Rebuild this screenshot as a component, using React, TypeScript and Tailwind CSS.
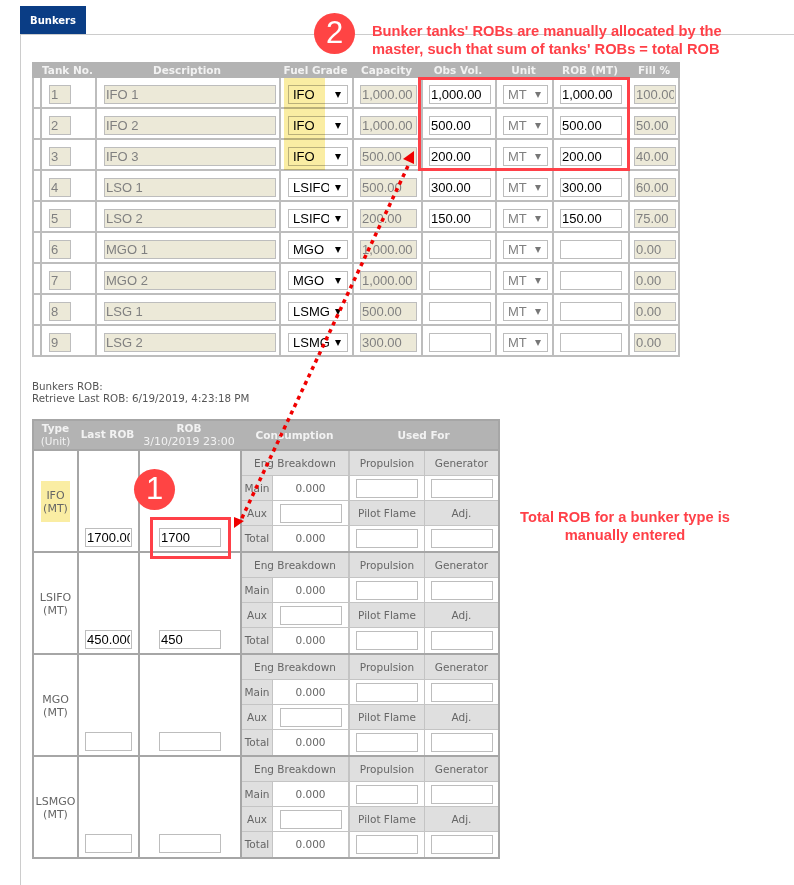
import React from "react";

const sans = "font-['DejaVu_Sans',sans-serif]";
const arial = "font-['Liberation_Sans',Arial,sans-serif]";

// One row of the tank table
const tanks = [
  { no: "1", desc: "IFO 1", grade: "IFO", cap: "1,000.00", obs: "1,000.00", rob: "1,000.00", fill: "100.00" },
  { no: "2", desc: "IFO 2", grade: "IFO", cap: "1,000.00", obs: "500.00", rob: "500.00", fill: "50.00" },
  { no: "3", desc: "IFO 3", grade: "IFO", cap: "500.00", obs: "200.00", rob: "200.00", fill: "40.00" },
  { no: "4", desc: "LSO 1", grade: "LSIFO", cap: "500.00", obs: "300.00", rob: "300.00", fill: "60.00" },
  { no: "5", desc: "LSO 2", grade: "LSIFO", cap: "200.00", obs: "150.00", rob: "150.00", fill: "75.00" },
  { no: "6", desc: "MGO 1", grade: "MGO", cap: "1,000.00", obs: "", rob: "", fill: "0.00" },
  { no: "7", desc: "MGO 2", grade: "MGO", cap: "1,000.00", obs: "", rob: "", fill: "0.00" },
  { no: "8", desc: "LSG 1", grade: "LSMGO", cap: "500.00", obs: "", rob: "", fill: "0.00" },
  { no: "9", desc: "LSG 2", grade: "LSMGO", cap: "300.00", obs: "", rob: "", fill: "0.00" },
];

const bunkers = [
  { type: "IFO", last: "1700.000", rob: "1700", mark: true },
  { type: "LSIFO", last: "450.000", rob: "450", mark: false },
  { type: "MGO", last: "", rob: "", mark: false },
  { type: "LSMGO", last: "", rob: "", mark: false },
];

const tankCols = "grid grid-cols-[8px_55px_184px_73px_69px_74px_57px_76px_52px]";

// Disabled inputs get the beige fill, the others stay white
const Field = ({ value, width, off }: { value: string; width: string; off?: boolean }) => (
  <input
    readOnly
    value={value}
    className={`${width} ${arial} block h-[19px] border border-[#bdbdbd] px-px text-[13px] outline-none ${
      off ? "bg-[#ece9d8] text-[#808080]" : "bg-white text-black"
    }`}
  />
);

const Pick = ({ value, width, off }: { value: string; width: string; off?: boolean }) => (
  <div
    className={`${width} ${arial} relative flex h-[19px] items-center overflow-hidden border border-[#bdbdbd] bg-white pl-[4px] text-[13px] ${
      off ? "text-[#808080]" : "text-black"
    }`}
  >
    <span className="whitespace-nowrap">{value}</span>
    <span className="absolute top-0 right-0 flex h-full w-[18px] items-center justify-start bg-white pl-[6px]">
      <svg width="6" height="6" viewBox="0 0 6 6">
        <path d="M0 0h6L3 6z" fill={off ? "#777" : "#000"} />
      </svg>
    </span>
  </div>
);

const TankCell = ({ children, pad }: { children?: React.ReactNode; pad: string }) => (
  <div className={`${pad} border-b-2 border-l-2 border-[#bdbdbd] pt-[7px]`}>{children}</div>
);

const TankTable = () => (
  <div className="relative ml-[11px] w-[648px]">
    <div className={`${tankCols} ${sans} h-[16px] bg-[#b3b3b3] text-[10.5px] leading-[16px] font-bold text-[#f2f2f2]`}>
      <div />
      <div className="text-center whitespace-nowrap">Tank No.</div>
      <div className="text-center">Description</div>
      <div className="text-center">Fuel Grade</div>
      <div className="text-center">Capacity</div>
      <div className="text-center">Obs Vol.</div>
      <div className="text-center">Unit</div>
      <div className="text-center">ROB (MT)</div>
      <div className="text-center">Fill %</div>
    </div>
    <div className="border-r-2 border-[#bdbdbd]">
      {tanks.map((t) => (
        <div key={t.no} className={`${tankCols} h-[31px]`}>
          <TankCell pad="" />
          <TankCell pad="pl-[7px]"><Field off value={t.no} width="w-[22px]" /></TankCell>
          <TankCell pad="pl-[7px]"><Field off value={t.desc} width="w-[172px]" /></TankCell>
          <TankCell pad="pl-[7px]"><Pick value={t.grade} width="w-[60px]" /></TankCell>
          <TankCell pad="pl-[6px]"><Field off value={t.cap} width="w-[57px]" /></TankCell>
          <TankCell pad="pl-[6px]"><Field value={t.obs} width="w-[62px]" /></TankCell>
          <TankCell pad="pl-[6px]"><Pick off value="MT" width="w-[45px]" /></TankCell>
          <TankCell pad="pl-[6px]"><Field value={t.rob} width="w-[62px]" /></TankCell>
          <TankCell pad="pl-[4px]"><Field off value={t.fill} width="w-[42px]" /></TankCell>
        </div>
      ))}
    </div>
    {/* yellow marker over the IFO grades */}
    <div className="absolute top-[16px] left-[252px] h-[92px] w-[41px] bg-[#faeda3] mix-blend-multiply" />
  </div>
);

const Cell = ({ children, className = "" }: { children?: React.ReactNode; className?: string }) => (
  <div className={`flex h-[25px] items-center justify-center border-[#c4c4c4] ${className}`}>{children}</div>
);

// Main / Aux / Total block on the right of each bunker type
const Consumption = () => (
  <div className="grid grid-cols-[30px_76px_76px_74px] border-l-2 border-[#a6a6a6] text-[10.5px] text-[#666]">
    <Cell className="col-span-2 border-b bg-[#dfdfdf] pt-px">Eng Breakdown</Cell>
    <Cell className="border-b border-l-2 bg-[#dfdfdf] pt-px">Propulsion</Cell>
    <Cell className="border-b border-l bg-[#dfdfdf] pt-px">Generator</Cell>

    <Cell className="border-b bg-[#dfdfdf] pt-px">Main</Cell>
    <Cell className="border-b border-l pt-px">0.000</Cell>
    <Cell className="border-b border-l-2"><Field value="" width="w-[62px]" /></Cell>
    <Cell className="border-b border-l"><Field value="" width="w-[62px]" /></Cell>

    <Cell className="border-b bg-[#dfdfdf] pt-px">Aux</Cell>
    <Cell className="border-b border-l"><Field value="" width="w-[62px]" /></Cell>
    <Cell className="border-b border-l-2 bg-[#dfdfdf] pt-px">Pilot Flame</Cell>
    <Cell className="border-b border-l bg-[#dfdfdf] pt-px">Adj.</Cell>

    <Cell className="bg-[#dfdfdf] pt-px">Total</Cell>
    <Cell className="border-l pt-px">0.000</Cell>
    <Cell className="border-l-2"><Field value="" width="w-[62px]" /></Cell>
    <Cell className="border-l"><Field value="" width="w-[62px]" /></Cell>
  </div>
);

const bunkerCols = "grid grid-cols-[43px_61px_102px_258px]";

const BunkerTable = () => (
  <div className={`${sans} ml-[11px] mt-[15px] w-[468px] border-2 border-[#a6a6a6]`}>
    <div className={`${bunkerCols} h-[30px] border-b-2 border-[#a6a6a6] bg-[#b3b3b3] text-center text-[10.5px] leading-[13px] text-[#f2f2f2]`}>
      <div className="pt-px"><b>Type</b><br />(Unit)</div>
      <div className="pt-[7px] font-bold whitespace-nowrap">Last ROB</div>
      <div className="pt-px text-[11px] whitespace-nowrap"><b className="text-[10.5px]">ROB</b><br />3/10/2019 23:00</div>
      <div className="grid grid-cols-[109px_149px] pt-[8px] font-bold">
        <div>Consumption</div>
        <div>Used For</div>
      </div>
    </div>
    {bunkers.map((b, i) => (
      <div key={b.type} className={`${bunkerCols} ${i < 3 ? "h-[102px] border-b-2 border-[#a6a6a6]" : "h-[100px]"}`}>
        <div className="flex items-center justify-center text-[11px] leading-[13px] text-[#666]">
          <div className={`w-[29px] pt-[8px] pb-[7px] text-center ${b.mark ? "bg-[#faeda3]" : ""}`}>
            <div className={b.type.length > 3 ? "-mx-[6px]" : ""}>{b.type}</div>
            <div>(MT)</div>
          </div>
        </div>
        <div className="flex items-end justify-center border-l-2 border-[#a6a6a6] pb-[4px]">
          <Field value={b.last} width="w-[47px]" />
        </div>
        <div className="flex items-end justify-center border-l-2 border-[#a6a6a6] pb-[4px]">
          <Field value={b.rob} width="w-[62px]" />
        </div>
        <Consumption />
      </div>
    ))}
  </div>
);

// Callouts and the dotted arrow lie over the tables
const Overlay = () => (
  <>
    <svg className="pointer-events-none absolute top-0 left-0" width="794" height="885">
      <line x1="408" y1="166" x2="241" y2="520" stroke="#f00000" strokeWidth="3.5" strokeDasharray="4 4.2" />
      <path d="M414 151L403 159L414 164z" fill="#f00000" />
      <path d="M234 528L234 517L244 521z" fill="#f00000" />
    </svg>
    <div className="absolute top-[77px] left-[418px] h-[94px] w-[212px] border-[3px] border-[#ff4048]" />
    <div className="absolute top-[517px] left-[150px] h-[42px] w-[81px] border-[3px] border-[#ff4048]" />
    <div className={`${arial} absolute top-[13px] left-[314px] flex h-[41px] w-[41px] items-center justify-center rounded-full bg-[#ff4444] text-[31px] text-white`}>2</div>
    <div className={`${arial} absolute top-[469px] left-[134px] flex h-[41px] w-[41px] items-center justify-center rounded-full bg-[#ff4444] text-[31px] text-white`}>1</div>
    <div className={`${arial} absolute top-[22px] left-[372px] text-[14.67px] leading-[18px] font-bold whitespace-nowrap text-[#ff4048]`}>
      Bunker tanks' ROBs are manually allocated by the
      <br />
      master, such that sum of tanks' ROBs = total ROB
    </div>
    <div className={`${arial} absolute top-[508px] left-[505px] w-[240px] text-center text-[14.67px] leading-[18px] font-bold text-[#ff4048]`}>
      Total ROB for a bunker type is
      <br />
      manually entered
    </div>
  </>
);

export default function App() {
  return (
    <div className="relative h-[885px] w-[794px] overflow-hidden bg-white pt-[6px] pl-[20px]">
      <div className="h-[29px] border-b border-[#cccccc]">
        <div className={`${sans} flex h-[28px] w-[66px] items-center justify-center bg-[#0a3d85] text-[10px] font-bold text-white`}>
          Bunkers
        </div>
      </div>
      <div className="h-[850px] border-l border-[#cccccc] pt-[27px]">
        <TankTable />
        <div className={`${sans} ml-[11px] mt-[23px] text-[10.3px] leading-[12px] text-[#555]`}>
          Bunkers ROB:
          <br />
          Retrieve Last ROB: 6/19/2019, 4:23:18 PM
        </div>
        <BunkerTable />
      </div>
      <Overlay />
    </div>
  );
}
